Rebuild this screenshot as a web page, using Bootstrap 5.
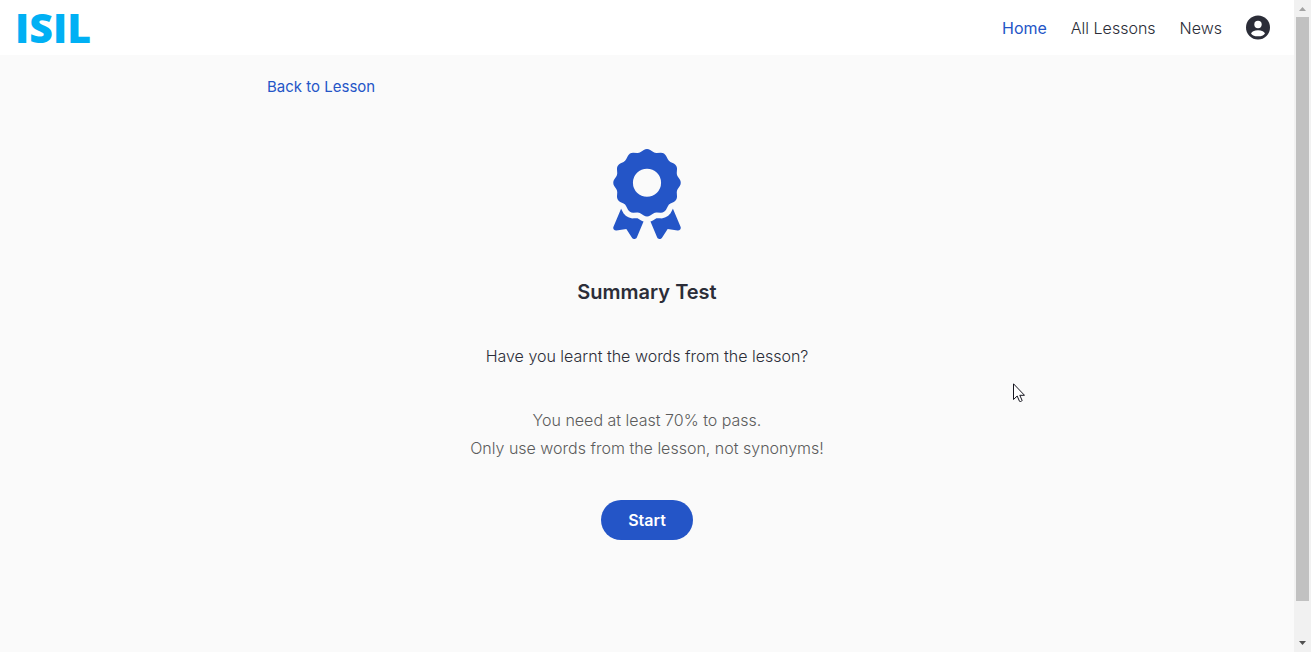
<!DOCTYPE html>
<html lang="en">
<head>
<meta charset="utf-8">
<meta name="viewport" content="width=device-width, initial-scale=1">
<title>Summary Test - ISIL</title>
<link href="https://cdn.jsdelivr.net/npm/bootstrap@5.3.0/dist/css/bootstrap.min.css" rel="stylesheet">
<style>
  body { font-family: Inter, "Liberation Sans", sans-serif; font-size: 16px; font-weight: 300; line-height: 28px; color: #2b2d38; background: #fafafa; }
  .site-bar { height: 55px; padding: 0 24px 0 15px; background: #fff; }
  .site-logo { font-family: "Open Sans", "Liberation Sans", sans-serif; font-weight: 800; font-size: 41px; line-height: 52px; padding-bottom: 2px; color: #00b0f4; }
  .site-logo:hover { color: #00b0f4; }
  .site-links { gap: 24px; }
  .site-links a { color: #2b2d38; }
  .site-links a.active, .back-link { color: #2455c7; font-weight: 400; }
  .lesson-area { width: 100%; max-width: 760px; padding-top: 17px; }
  .back-link { font-size: 15px; }
  .award { width: 68px; height: 90px; margin-top: 48px; }
  .test-title { font-size: 20px; font-weight: 600; line-height: 28px; margin: 39px 0 36px; }
  .question { margin-bottom: 36px; }
  .hint { color: #5c5c5c; margin-bottom: 38px; }
  .start-btn { width: 92px; height: 40px; padding: 0; font-weight: 600; color: #fff; background: #2455c7; }
  .start-btn:hover { color: #fff; background: #1d49af; }
  .scroll-track { width: 17px; background: #f1f1f1; }
  .scroll-thumb { width: 13px; background: #c1c1c1; flex: 0 1 584px; }
  .scroll-cap { width: 17px; height: 17px; }
  .pointer { left: 1013px; top: 383px; width: 12px; height: 19px; }
</style>
</head>
<body>
<div class="d-flex min-vh-100">
  <div class="flex-grow-1">
    <header class="site-bar d-flex align-items-center justify-content-between">
      <a class="site-logo text-decoration-none" href="#">ISIL</a>
      <nav class="site-links d-flex align-items-center" aria-label="Main">
        <a class="active text-decoration-none" href="#">Home</a>
        <a class="text-decoration-none" href="#">All Lessons</a>
        <a class="text-decoration-none" href="#">News</a>
        <a class="d-flex" href="#" aria-label="Account">
          <svg width="24" height="24" viewBox="0 0 24 24" overflow="visible" aria-hidden="true"><circle cx="12" cy="11.500" r="12" fill="#2b2d38"/><circle cx="12" cy="8.500" r="3.700" fill="#fff"/><ellipse cx="12" cy="17.300" rx="6.700" ry="3" fill="#fff"/></svg>
        </a>
      </nav>
    </header>
    <main class="lesson-area mx-auto">
      <a class="back-link text-decoration-none d-inline-block" href="#">Back to Lesson</a>
      <section class="d-flex flex-column align-items-center text-center">
        <svg class="award" viewBox="0 0 384 512" fill="#2455c7" aria-hidden="true"><path d="M173.8 5.5c11-7.3 25.4-7.3 36.4 0L228 17.2c6 3.9 13 5.8 20.1 5.4l21.3-1.3c13.2-.8 25.6 6.4 31.5 18.2l9.6 19.1c3.2 6.4 8.4 11.5 14.7 14.7L344.5 83c11.8 5.9 19 18.3 18.2 31.5l-1.3 21.3c-.4 7.1 1.5 14.2 5.4 20.1l11.8 17.8c7.3 11 7.3 25.4 0 36.4L366.8 228c-3.9 6-5.8 13-5.4 20.1l1.3 21.3c.8 13.2-6.4 25.6-18.2 31.5l-19.1 9.6c-6.4 3.2-11.5 8.4-14.7 14.7L301 344.5c-5.9 11.8-18.3 19-31.5 18.2l-21.3-1.3c-7.1-.4-14.2 1.5-20.1 5.4l-17.8 11.8c-11 7.3-25.4 7.3-36.4 0L156 366.8c-6-3.9-13-5.8-20.1-5.4l-21.3 1.3c-13.2 .8-25.6-6.4-31.5-18.2l-9.6-19.1c-3.2-6.4-8.4-11.5-14.7-14.7L39.5 301c-11.8-5.9-19-18.3-18.2-31.5l1.3-21.3c.4-7.1-1.5-14.2-5.4-20.1L5.5 210.2c-7.3-11-7.3-25.4 0-36.4L17.2 156c3.9-6 5.8-13 5.4-20.1l-1.3-21.3c-.8-13.2 6.4-25.6 18.2-31.5l19.1-9.6C65 70.2 70.2 65 73.4 58.6L83 39.5c5.9-11.8 18.3-19 31.5-18.2l21.3 1.3c7.1 .4 14.2-1.5 20.1-5.4L173.8 5.5zM272 192a80 80 0 1 0 -160 0 80 80 0 1 0 160 0zM1.3 441.8L44.4 339.3c.2 .1 .3 .2 .4 .4l9.6 19.1c11.7 23.2 36 37.3 62 35.8l21.3-1.3c.2 0 .5 0 .7 .2l17.8 11.8c5.1 3.3 10.5 5.9 16.1 7.7l-37.6 89.3c-2.3 5.5-7.4 9.2-13.3 9.7s-11.6-2.2-14.8-7.2L74.4 455.5l-56.1 8.3c-5.7 .8-11.4-1.5-15-6s-4.3-10.7-2.1-16zm248 60.4L211.7 413c5.6-1.8 11-4.3 16.1-7.7l17.8-11.8c.2-.1 .4-.2 .7-.2l21.3 1.3c26 1.5 50.3-12.6 62-35.8l9.6-19.1c.1-.2 .2-.3 .4-.4l43.2 102.5c2.2 5.3 1.4 11.4-2.1 16s-9.3 6.9-15 6l-56.1-8.3-32.2 49.2c-3.2 5-8.9 7.7-14.8 7.2s-11-4.3-13.3-9.7z"/></svg>
        <h1 class="test-title">Summary Test</h1>
        <p class="question">Have you learnt the words from the lesson?</p>
        <p class="hint">You need at least 70% to pass.<br>Only use words from the lesson, not synonyms!</p>
        <button class="btn rounded-pill start-btn" type="button">Start</button>
      </section>
    </main>
  </div>
  <div class="scroll-track d-flex flex-column align-items-center flex-shrink-0" aria-hidden="true">
    <svg class="scroll-cap" viewBox="0 0 17 17"><path d="M5 11h7L8.500 7z" fill="#a3a3a3"/></svg>
    <div class="scroll-thumb"></div>
    <svg class="scroll-cap mt-auto" viewBox="0 0 17 17"><path d="M5 6h7L8.500 10z" fill="#505050"/></svg>
  </div>
</div>
<svg class="pointer position-absolute" viewBox="0 0 12 19" aria-hidden="true"><path d="M.5.8v15.700l3.700-3.500 2.300 5.300c1 .6 2.300 0 2.600-.9l-2.300-5.100h4.700z" fill="#fff" stroke="#15151f"/></svg>
<script src="https://cdn.jsdelivr.net/npm/bootstrap@5.3.0/dist/js/bootstrap.bundle.min.js"></script>
</body>
</html>
